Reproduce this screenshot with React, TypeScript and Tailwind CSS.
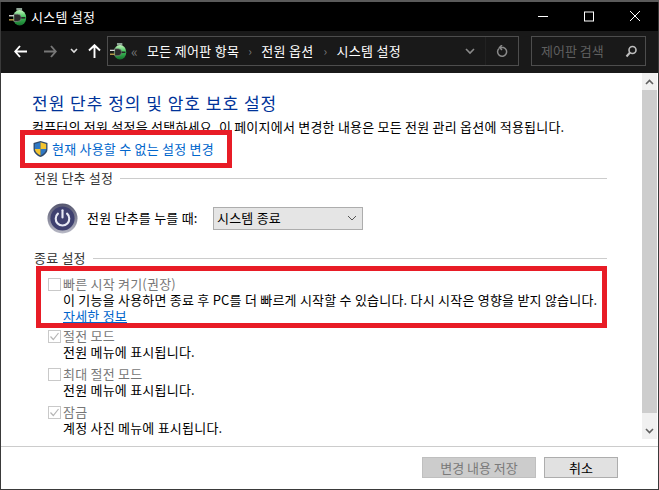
import React from "react";

const font = { fontFamily: '"Noto Sans CJK KR", "Noto Sans", sans-serif' };

function BatteryIcon({ size = 22, id }: { size?: number; id: string }) {
  return (
    <svg width={size} height={size} viewBox="0 0 22 22" className="shrink-0">
      <defs>
        <linearGradient id={id} x1="0" y1="0" x2="0" y2="1">
          <stop offset="0%" stopColor="#c8f5c0" />
          <stop offset="45%" stopColor="#3fc45a" />
          <stop offset="100%" stopColor="#15702c" />
        </linearGradient>
      </defs>
      <rect x="9" y="0" width="7" height="3" fill="#8fa596" />
      <ellipse cx="13" cy="12" rx="8" ry="9.500" fill={`url(#${id})`} />
      <path d="M6 7.500h4.500a4.500 4.500 0 0 1 0 9H6z" fill="#2b2b2b" stroke="#8c8c8c" strokeWidth="0.800" />
      <path d="M15 12h5" stroke="#262626" strokeWidth="2" />
      <path d="M0 9.500h6" stroke="#f0f0f0" strokeWidth="1.500" />
      <path d="M0 14.500h6" stroke="#e0bc54" strokeWidth="1.500" />
    </svg>
  );
}

function Shield() {
  return (
    <svg width="15" height="18" viewBox="0 0 14 16" className="shrink-0">
      <path d="M7 0.500 13.500 2.500V8c0 3.600-2.800 6-6.500 7.500C3.300 14 .5 11.600 .5 8V2.500z" fill="#30496b" />
      <path d="M7 1.600V8H1.700V3.300z" fill="#2f78c4" />
      <path d="M7 1.600 12.300 3.300V8H7z" fill="#f4c430" />
      <path d="M7 8h5.300c-.2 2.700-2.400 4.700-5.300 6z" fill="#2f78c4" />
      <path d="M7 8v6C4.100 12.700 1.900 10.700 1.700 8z" fill="#f4c430" />
    </svg>
  );
}

function PowerIcon() {
  return (
    <svg width="31" height="31" viewBox="0 0 32 32" className="shrink-0">
      <defs>
        <linearGradient id="pw" x1="0" y1="0" x2="0" y2="1">
          <stop offset="0%" stopColor="#55566f" />
          <stop offset="100%" stopColor="#b9bac6" />
        </linearGradient>
      </defs>
      <circle cx="16" cy="16" r="15.500" fill="url(#pw)" />
      <circle cx="16" cy="16" r="12.500" fill="#3f4170" />
      <path d="M11.300 11a7 7 0 1 0 9.400 0" fill="none" stroke="#e8eaf6" strokeWidth="2.200" strokeLinecap="round" />
      <path d="M16 7.500v7.500" stroke="#e8eaf6" strokeWidth="2.200" strokeLinecap="round" />
    </svg>
  );
}

function CheckBox({ checked }: { checked?: boolean }) {
  return (
    <span className="w-[13px] h-[13px] border border-[#c9c9c9] bg-white shrink-0 flex items-center justify-center">
      {checked && (
        <svg width="11" height="11" viewBox="0 0 11 11">
          <path d="M1.500 5.500 4.300 8.500 9.500 2" fill="none" stroke="#b5b5b5" strokeWidth="1.200" />
        </svg>
      )}
    </span>
  );
}

function Option({ label, desc, checked, link }: { label: string; desc: string; checked?: boolean; link?: boolean }) {
  return (
    <div className="flex flex-col">
      <div className="flex items-center gap-[2px] h-[16px] leading-[16px] text-[#777777]">
        <CheckBox checked={checked} />
        <span className="whitespace-nowrap">{label}</span>
      </div>
      <div className="pl-[15px] h-[16px] leading-[16px] text-black whitespace-nowrap">{desc}</div>
      {link && <div className="pl-[15px] h-[14px] leading-[15px] text-[#0066cc] underline">자세한 정보</div>}
    </div>
  );
}

function Group({ title }: { title: string }) {
  return (
    <div className="flex items-center gap-[7px] h-[18px] text-[#333333] text-[13px] tracking-[0.2px]">
      <span className="whitespace-nowrap">{title}</span>
      <div className="flex-1 h-px bg-[#cccccc]" />
    </div>
  );
}

export default function App() {
  return (
    <div className="relative w-[659px] h-[490px] overflow-hidden bg-[#3a3a3a] flex flex-col" style={font}>
      <div className="h-[2px] bg-[#5a5a5a] shrink-0" />
      <div className="flex-1 flex flex-col ml-px mb-[1px] mr-[1px] min-h-0">
        {/* Title bar */}
        <div className="h-[29px] bg-black flex items-center shrink-0">
          <div className="pl-[8px] flex items-center gap-[4px]">
            <BatteryIcon size={18} id="bat1" />
            <span className="text-white text-[13px] tracking-[0.25px]">시스템 설정</span>
          </div>
          <div className="ml-auto flex items-center h-full text-white">
            <div className="w-[46px] flex justify-center">
              <svg width="12" height="12" viewBox="0 0 12 12"><path d="M1 5.500h10" stroke="#fff" /></svg>
            </div>
            <div className="w-[46px] flex justify-center">
              <svg width="12" height="12" viewBox="0 0 12 12"><rect x="1.500" y="1" width="9" height="9" fill="none" stroke="#fff" /></svg>
            </div>
            <div className="w-[46px] flex justify-center">
              <svg width="12" height="12" viewBox="0 0 12 12"><path d="M1 0l10 10M11 0 1 10" stroke="#fff" /></svg>
            </div>
          </div>
        </div>
        {/* Nav bar */}
        <div className="h-[42px] bg-[#191919] flex items-center shrink-0 pl-[13px] pr-[12px] pb-[2px]">
          <svg width="13" height="13" viewBox="0 0 13 13" className="shrink-0">
            <path d="M6 1 1.200 6.500 6 12M2 6.500h11" fill="none" stroke="#fff" strokeWidth="1.900" />
          </svg>
          <svg width="13" height="13" viewBox="0 0 13 13" className="shrink-0 ml-[17px]">
            <path d="M7 1l4.800 5.500L7 12M11 6.500H0" fill="none" stroke="#777" strokeWidth="1.900" />
          </svg>
          <svg width="8" height="6" viewBox="0 0 8 6" className="shrink-0 ml-[13px]">
            <path d="M1 1l3 3 3-3" fill="none" stroke="#ddd" strokeWidth="1.600" />
          </svg>
          <svg width="13" height="14" viewBox="0 0 13 14" className="shrink-0 ml-[10px]">
            <path d="M1 6.500 6.500 1.200 12 6.500M6.500 2v12" fill="none" stroke="#fff" strokeWidth="1.900" />
          </svg>
          <div className="ml-[6px] w-[412px] h-[30px] border border-[#4d4d4d] flex items-center text-white text-[13px] tracking-[0.3px] shrink-0">
            <div className="pl-[2px]"><BatteryIcon size={17} id="bat2" /></div>
            <span className="ml-[4px] text-[#777777] text-[14px] leading-none">«</span>
            <span className="ml-[9px] whitespace-nowrap">모든 제어판 항목</span>
            <span className="mx-[9px] text-[#777777] text-[12px]">›</span>
            <span className="whitespace-nowrap">전원 옵션</span>
            <span className="ml-[10px] mr-[9px] text-[#777777] text-[12px]">›</span>
            <span className="whitespace-nowrap">시스템 설정</span>
            <div className="ml-auto flex items-center h-full">
              <svg width="10" height="7" viewBox="0 0 10 7" className="mr-[10px]">
                <path d="M1 1l4 4 4-4" fill="none" stroke="#8a8a8a" strokeWidth="1.600" />
              </svg>
              <div className="w-px h-full bg-[#222222] mr-[10px]" />
              <svg width="12" height="13" viewBox="0 0 12 13" className="mr-[10px]">
                <path d="M3 3.500a4.500 4.500 0 1 0 4.500-1H4M6 0 3.500 2.500 6 5" fill="none" stroke="#8a8a8a" strokeWidth="1.500" />
              </svg>
            </div>
          </div>
          <div className="ml-[12px] w-[115px] h-[30px] border border-[#4d4d4d] flex items-center pl-[9px] pr-[7px] text-[#5f5f5f] text-[13px] shrink-0">
            <span className="whitespace-nowrap">제어판 검색</span>
            <svg width="13" height="13" viewBox="0 0 13 13" className="ml-auto">
              <circle cx="7.500" cy="5" r="3.500" fill="none" stroke="#bdbdbd" strokeWidth="1.600" />
              <path d="M5 7.500 1.500 11.500" stroke="#bdbdbd" strokeWidth="2" />
            </svg>
          </div>
        </div>
        {/* Content */}
        <div className="h-[373px] bg-white flex shrink-0">
          <div className="flex-1 pl-[31px] pr-[35px] pt-[18px] text-[13px] tracking-[0.22px] min-w-0">
            <div className="text-[#003399] text-[17px] h-[24px] leading-[24px] tracking-[1px] whitespace-nowrap">전원 단추 정의 및 암호 보호 설정</div>
            <div className="text-black h-[20px] leading-[20px] mt-[2px] whitespace-nowrap">컴퓨터의 전원 설정을 선택하세요. 이 페이지에서 변경한 내용은 모든 전원 관리 옵션에 적용됩니다.</div>
            <div className="flex items-center gap-[5px] h-[20px] text-[#0066cc] mt-[2px] ml-px">
              <Shield />
              <span className="-ml-px">현재 사용할 수 없는 설정 변경</span>
            </div>
            <div className="mt-[10px] ml-[2px]"><Group title="전원 단추 설정" /></div>
            <div className="flex items-center mt-[15px] ml-[15px] h-[32px]">
              <PowerIcon />
              <span className="ml-[9px] w-[127px] shrink-0 text-black whitespace-nowrap">전원 단추를 누를 때:</span>
              <div className="w-[150px] h-[23px] -ml-px bg-[#e5e5e5] border border-[#adadad] flex items-center pl-[3px] pr-[5px] text-black">
                <span>시스템 종료</span>
                <svg width="10" height="6" viewBox="0 0 10 6" className="ml-auto">
                  <path d="M1 1l4 4 4-4" fill="none" stroke="#555" strokeWidth="1" />
                </svg>
              </div>
            </div>
            <div className="mt-[15px] ml-[2px]"><Group title="종료 설정" /></div>
            <div className="ml-[16px] mt-[9px] flex flex-col gap-[6px]">
              <Option label="빠른 시작 켜기(권장)" desc="이 기능을 사용하면 종료 후 PC를 더 빠르게 시작할 수 있습니다. 다시 시작은 영향을 받지 않습니다." link />
              <Option label="절전 모드" desc="전원 메뉴에 표시됩니다." checked />
              <Option label="최대 절전 모드" desc="전원 메뉴에 표시됩니다." />
              <Option label="잠금" desc="계정 사진 메뉴에 표시됩니다." checked />
            </div>
          </div>
          {/* Scrollbar */}
          <div className="w-[15px] mr-[1px] mb-[7px] bg-[#f0f0f0] flex flex-col shrink-0">
            <div className="h-[17px] flex items-center justify-center">
              <svg width="9" height="6" viewBox="0 0 9 6"><path d="M1 5l3.500-3.500L8 5" fill="none" stroke="#606060" strokeWidth="1.600" /></svg>
            </div>
            <div className="flex-1 bg-[#cdcdcd]" />
            <div className="h-[9px]" />
            <div className="h-[17px] flex items-center justify-center">
              <svg width="9" height="6" viewBox="0 0 9 6"><path d="M1 1l3.500 3.500L8 1" fill="none" stroke="#606060" strokeWidth="1.600" /></svg>
            </div>
          </div>
        </div>
        {/* Footer */}
        <div className="flex-1 bg-white border-t border-[#cccccc] flex items-start justify-end pt-[10px] pr-[40px] gap-[8px] text-[13px]">
          <div className="w-[114px] h-[21px] bg-[#cccccc] border border-[#bfbfbf] flex items-center justify-center text-[#7a7a7a] whitespace-nowrap">변경 내용 저장</div>
          <div className="w-[74px] h-[21px] bg-[#e1e1e1] border border-[#adadad] flex items-center justify-center text-black">취소</div>
        </div>
      </div>
      {/* Red annotation boxes */}
      <div className="absolute left-[20px] top-[130px] w-[212px] h-[38px] border-[5px] border-[#e81c26]" />
      <div className="absolute left-[36px] top-[266px] w-[571px] h-[62px] border-[5px] border-[#e81c26]" />
    </div>
  );
}
